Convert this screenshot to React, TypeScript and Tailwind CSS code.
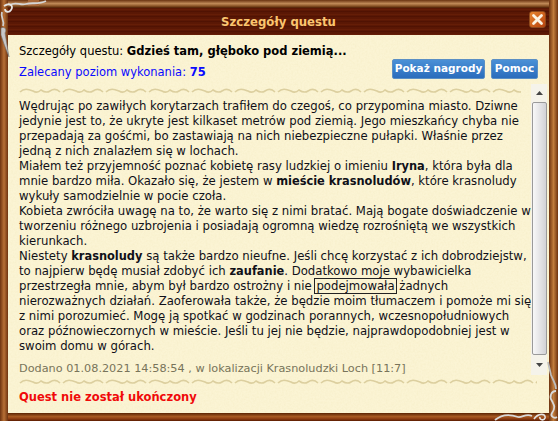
const Divider = ({ w }: { w: number }) => {
  const n = Math.ceil(w / 43);
  return (
    <svg width={w} height="6" className="block relative" aria-hidden="true">
      {Array.from({ length: n }).map((_, i) => (
        <path
          key={i}
          transform={`translate(${i * 43} 0)`}
          d="M1 4 C5 0 9 1 14 3 C17 5 20 4 22 2 C25 4 28 5 31 3 C34 1 38 1 41 4"
          fill="none"
          stroke="#dccf9f"
          strokeWidth="1.6"
        />
      ))}
    </svg>
  );
};

const Texture = () => (
  <svg className="absolute inset-0 w-full h-full pointer-events-none" aria-hidden="true">
    <filter id="parchment">
      <feTurbulence type="fractalNoise" baseFrequency="0.55" numOctaves="2" seed="4" />
      <feColorMatrix values="0 0 0 0 0.8  0 0 0 0 0.7  0 0 0 0 0.35  0.9 0 0 0 -0.3" />
    </filter>
    <rect width="100%" height="100%" filter="url(#parchment)" opacity="0.3" />
  </svg>
);

const CornerTopLeft = () => (
  <svg width="50" height="62" viewBox="0 0 50 62" className="absolute left-0 top-0" aria-hidden="true">
    <rect x="28" y="0" width="11" height="6" fill="#a8683a" />
    <path d="M10 5 C16 1 20 6 26 4 C32 2 38 5 46 1" fill="none" stroke="#d5d5d5" strokeWidth="1.8" />
    <path d="M4 6 C10 2 14 6 11 10 C9 13 5 12 5 9" fill="none" stroke="#e4e4e4" strokeWidth="1.8" />
    <path d="M2 12 C0 18 5 20 3 26" fill="none" stroke="#cfcfcf" strokeWidth="1.8" />
    <path d="M1 28 C5 26 7 30 5 33 L9 57 L4 44 L1 35 Z" fill="#c8c8c8" stroke="#6e6e6e" strokeWidth="0.6" />
  </svg>
);

const CornerBottomRight = () => (
  <svg width="64" height="60" viewBox="0 0 64 60" className="absolute right-0 bottom-0" aria-hidden="true">
    <path d="M1 59 C8 53 16 53 24 56 C28 57 32 52 38 55" fill="none" stroke="#d9d9d9" strokeWidth="1.8" />
    <path d="M40 58 C44 52 52 52 51 57 C50 60 45 59 46 56" fill="none" stroke="#e4e4e4" strokeWidth="1.6" />
    <path d="M54 1 L57 14 C59 20 62 22 62 28" fill="none" stroke="#bdbdbd" strokeWidth="1.8" />
    <path d="M62 30 C57 30 55 36 58 40 C60 44 62 46 58 52 C56 55 60 58 63 56" fill="none" stroke="#d9d9d9" strokeWidth="1.8" />
  </svg>
);

const btn = "h-[20px] rounded-[2px] bg-[linear-gradient(180deg,#4a90d6,#2a6cbc)] border border-[#5b8fc4] text-white text-[10.5px] font-bold";

export default function App() {
  return (
    <div
      className="relative w-[558px] h-[421px] overflow-hidden pt-[8px] pb-[8px] pl-[8px] pr-[9px] bg-[#8a4a1a]"
      style={{ fontFamily: '"DejaVu Sans", Verdana, sans-serif' }}
    >
      <div className="absolute left-0 right-0 top-0 h-[8px] bg-[linear-gradient(180deg,#6a3311,#c08a58_45%,#8a5426_75%,#4a1c04)]" />
      <div className="absolute left-0 right-0 bottom-0 h-[8px] bg-[linear-gradient(180deg,#5a2404,#a85a22_45%,#8a3a10_75%,#5a1c02)]" />
      <div className="absolute left-0 top-0 bottom-0 w-[8px] bg-[linear-gradient(90deg,#6e3310,#b87035_50%,#6e3310)]" />
      <div className="absolute right-0 top-0 bottom-0 w-[9px] bg-[linear-gradient(90deg,#6e3310,#c07c3c_50%,#6e3310)]" />

      <div className="relative flex flex-col h-full">
        <div className="flex items-center justify-center h-[27px] shrink-0 bg-[repeating-linear-gradient(180deg,#561504_0px,#6a2008_2px,#4c1002_3px,#5e1a06_5px)]">
          <span className="text-[11.7px] font-bold text-[#fbc56f] mt-[3px]">Szczegóły questu</span>
        </div>

        <div className="relative flex-1 flex flex-col bg-[#fbf4d4] pl-[1px] text-black">
          <Texture />
          <div className="relative flex justify-between items-end h-[53px] pl-[10px] pr-[11px]">
            <div className="flex flex-col gap-[6px] pt-[9px] self-start text-[11.5px] leading-[15px]">
              <div>
                Szczegóły questu: <b>Gdzieś tam, głęboko pod ziemią...</b>
              </div>
              <div className="text-[#0a0aff]">
                Zalecany poziom wykonania: <b>75</b>
              </div>
            </div>
            <div className="flex gap-[6px] mb-[9px]">
              <button className={`${btn} w-[93px]`}>Pokaż nagrody</button>
              <button className={`${btn} w-[47px]`}>Pomoc</button>
            </div>
          </div>

          <div className="relative flex h-[291px] pl-[10px] pr-[11px] justify-between">
            <div className="flex flex-col">
              <Divider w={502} />
              <div className="text-[11.7px] leading-[15px] text-[#101018] pt-[5px] whitespace-nowrap [&_b]:text-[11.4px]">
                Wędrując po zawiłych korytarzach trafiłem do czegoś, co przypomina miasto. Dziwne<br />
                jedynie jest to, że ukryte jest kilkaset metrów pod ziemią. Jego mieszkańcy chyba nie<br />
                przepadają za gośćmi, bo zastawiają na nich niebezpieczne pułapki. Właśnie przez<br />
                jedną z nich znalazłem się w lochach.<br />
                Miałem też przyjemność poznać kobietę rasy ludzkiej o imieniu <b>Iryna</b>, która była dla<br />
                mnie bardzo miła. Okazało się, że jestem w <b>mieście krasnoludów</b>, które krasnoludy<br />
                wykuły samodzielnie w pocie czoła.<br />
                Kobieta zwróciła uwagę na to, że warto się z nimi bratać. Mają bogate doświadczenie w<br />
                tworzeniu różnego uzbrojenia i posiadają ogromną wiedzę rozrośniętą we wszystkich<br />
                kierunkach.<br />
                Niestety <b>krasnoludy</b> są także bardzo nieufne. Jeśli chcę korzystać z ich dobrodziejstw,<br />
                to najpierw będę musiał zdobyć ich <b>zaufanie</b>. Dodatkowo moje wybawicielka<br />
                przestrzegła mnie, abym był bardzo ostrożny i nie <span className="outline outline-1 outline-[#222] px-[1px]">podejmowała</span> żadnych<br />
                nierozważnych działań. Zaoferowała także, że będzie moim tłumaczem i pomoże mi się<br />
                z nimi porozumieć. Mogę ją spotkać w godzinach porannych, wczesnopołudniowych<br />
                oraz późnowieczornych w mieście. Jeśli tu jej nie będzie, najprawdopodobniej jest w<br />
                swoim domu w górach.
              </div>
              <div className="text-[11.25px] text-[#78745a] mt-[8px] leading-[14px] whitespace-nowrap">
                Dodano 01.08.2021 14:58:54 , w lokalizacji Krasnoludzki Loch [11:7]
              </div>
            </div>
            <div className="w-[16px] flex flex-col items-center bg-[#f5f3ea] h-[291px] mt-[-4px] shrink-0">
              <div className="h-[18px] flex items-center justify-center">
                <svg width="7" height="4" viewBox="0 0 7 4"><path d="M3.5 0 L7 4 H0 Z" fill="#444" /></svg>
              </div>
              <div className="flex-1 w-[15px] rounded-[2px] border border-[#9a9a9a] bg-[linear-gradient(90deg,#f8f8f8,#d2d2d6)]" />
              <div className="h-[20px] flex items-center justify-center">
                <svg width="7" height="4" viewBox="0 0 7 4"><path d="M0 0 H7 L3.5 4 Z" fill="#444" /></svg>
              </div>
            </div>
          </div>

          <div className="relative pl-[10px]"><Divider w={518} /></div>
          <div className="relative pl-[10px] mt-[5px] text-[11.5px] font-bold text-[#f00a0a] leading-[15px]">
            Quest nie został ukończony
          </div>
        </div>
      </div>

      <CornerTopLeft />
      <CornerBottomRight />

      <button className="absolute left-[529px] top-[11px] w-[17px] h-[17px] rounded-[3px] bg-[linear-gradient(135deg,#e8852e,#b8420e)] border border-[#8f4a1c] flex items-center justify-center" aria-label="Zamknij">
        <svg width="13" height="13" viewBox="0 0 13 13"><path d="M2.5 2.5 L10.5 10.5 M10.5 2.5 L2.5 10.5" stroke="#fdf3e2" strokeWidth="2.8" strokeLinecap="round" /></svg>
      </button>
    </div>
  );
}
